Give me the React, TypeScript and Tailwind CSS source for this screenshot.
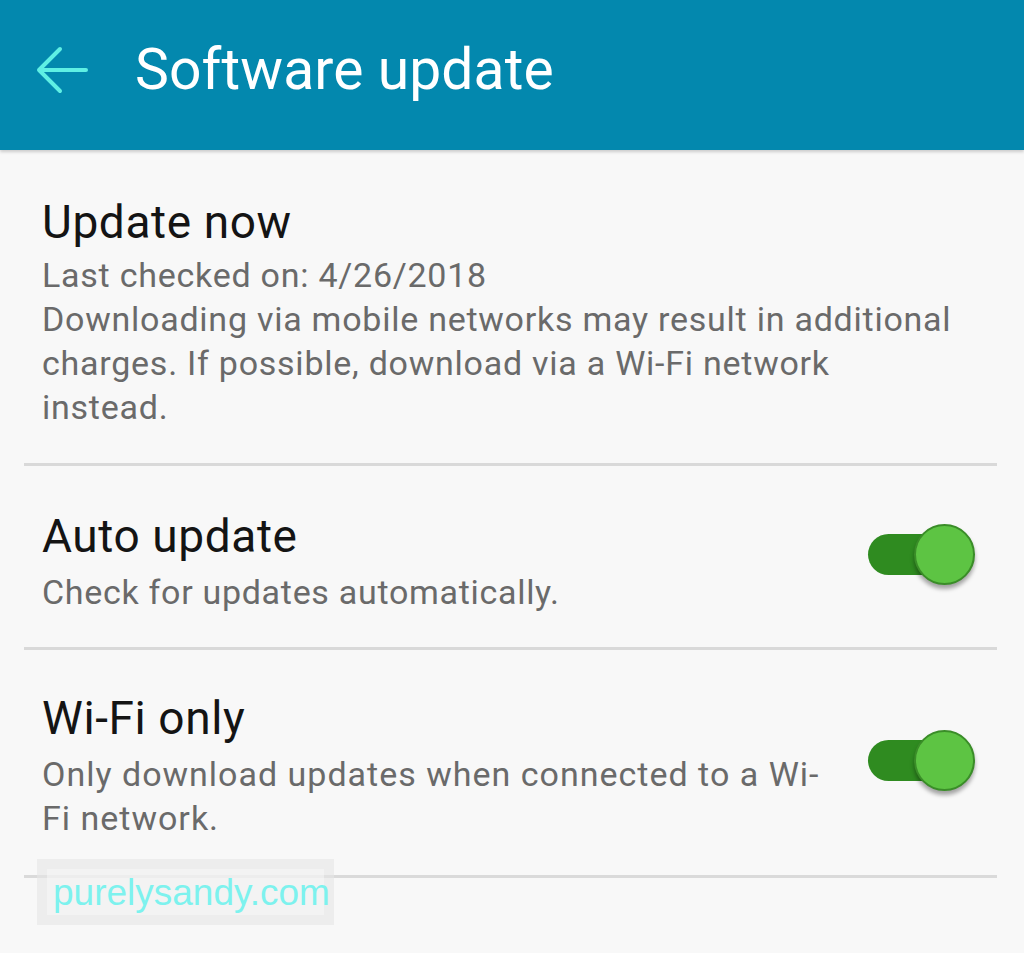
import React from "react";

function Toggle() {
  return (
    <div className="relative w-[110px] h-[64px] shrink-0">
      <div className="absolute left-[2px] top-[11px] w-[75px] h-[41px] rounded-full bg-[#2f8b20]" />
      <div className="absolute left-[48px] top-[1px] w-[61px] h-[61px] rounded-full bg-[#5dc443] border-[2px] border-[#3a8d28] shadow-[0_4px_4px_rgba(0,0,0,0.35)]" />
    </div>
  );
}

export default function App() {
  return (
    <div className="relative w-[1024px] h-[953px] bg-[#f8f8f8] overflow-hidden font-['Roboto',sans-serif]">
      <header className="h-[150px] bg-[#0388ae] flex items-center shadow-[0_2px_3px_rgba(0,0,0,0.18)]">
        <svg width="54" height="50" viewBox="0 0 54 50" className="ml-[35px] mt-[-10px]" fill="none" stroke="#5ff0e4" strokeWidth="4" strokeLinecap="round" strokeLinejoin="round">
          <path d="M4 25 H51 M25 4 L4 25 L25 46" />
        </svg>
        <h1 className="ml-[46px] mt-[-12px] text-white text-[57px] leading-none tracking-[0.1px]">Software update</h1>
      </header>

      <div className="pl-[24px] pr-[27px]">
        <div className="pl-[18px] pt-[44px] pb-[34px]">
          <div className="text-[#141414] text-[46px] leading-[56px] tracking-[0.6px]">Update now</div>
          <div className="mt-[3px] text-[#6a6a6a] text-[34px] leading-[44px] tracking-[0.75px]">
            Last checked on: 4/26/2018
            <br />
            Downloading via mobile networks may result in additional
            <br />
            charges. If possible, download via a Wi-Fi network
            <br />
            instead.
          </div>
        </div>
        <div className="h-[3px] bg-[#d9d9d9]" />

        <div className="pl-[18px] pt-[42px] pb-[33px] flex items-center justify-between">
          <div>
            <div className="text-[#141414] text-[46px] leading-[56px] tracking-[0.6px]">Auto update</div>
            <div className="mt-[6px] text-[#6a6a6a] text-[34px] leading-[44px] tracking-[0.7px]">Check for updates automatically.</div>
          </div>
          <div className="mr-[21px] mt-[-12px]">
            <Toggle />
          </div>
        </div>
        <div className="h-[3px] bg-[#d9d9d9]" />

        <div className="pl-[18px] pt-[40px] pb-[35px] flex items-center justify-between">
          <div>
            <div className="text-[#141414] text-[46px] leading-[56px] tracking-[0.6px]">Wi-Fi only</div>
            <div className="mt-[6px] text-[#6a6a6a] text-[34px] leading-[44px] tracking-[1px]">
              Only download updates when connected to a Wi-
              <br />
              Fi network.
            </div>
          </div>
          <div className="mr-[21px] mt-[-8px]">
            <Toggle />
          </div>
        </div>
        <div className="h-[3px] bg-[#dadada]" />
      </div>

      <div className="absolute left-[37px] top-[859px] w-[297px] h-[66px] bg-[#e6e6e6]/60 p-[10px]">
        <div className="w-full h-full bg-[#fafafa]/50 flex items-center pl-[6px]">
          <span className="font-['Liberation_Sans',sans-serif] text-[#7df2ee] text-[37px] leading-none">purelysandy.com</span>
        </div>
      </div>
    </div>
  );
}
